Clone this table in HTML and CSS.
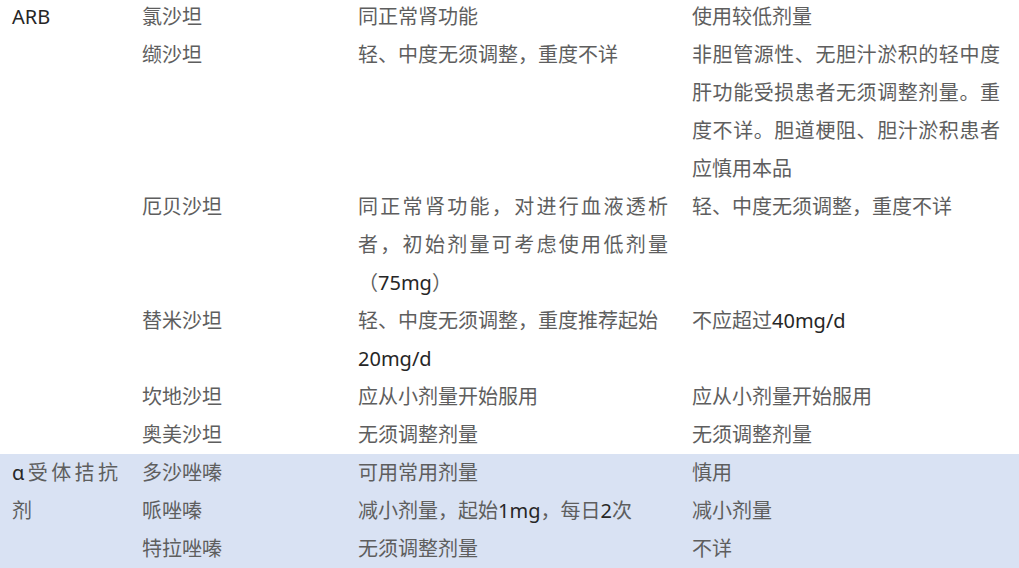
FILE: index.html
```html
<!DOCTYPE html>
<html lang="zh-CN">
<head>
  <meta charset="UTF-8">
  <meta name="viewport" content="width=device-width, initial-scale=1.0">
  <title>肝肾功能不全用药剂量</title>
  <link rel="stylesheet" href="styles.css">
</head>
<body>
  <table class="dose-table">
    <colgroup>
      <col class="c-class">
      <col class="c-drug">
      <col class="c-renal">
      <col class="c-hepatic">
    </colgroup>
    <tbody>
      <tr>
        <td class="lat" rowspan="6">ARB</td>
        <td>氯沙坦</td>
        <td>同正常肾功能</td>
        <td class="last">使用较低剂量</td>
      </tr>
      <tr>
        <td>缬沙坦</td>
        <td>轻、中度无须调整，重度不详</td>
        <td class="last just">非胆管源性、无胆汁淤积的轻中度肝功能受损患者无须调整剂量。重度不详。胆道梗阻、胆汁淤积患者应慎用本品</td>
      </tr>
      <tr>
        <td>厄贝沙坦</td>
        <td class="just">同正常肾功能，对进行血液透析者，初始剂量可考虑使用低剂量（<span class="lat">75mg</span>）</td>
        <td class="last">轻、中度无须调整，重度不详</td>
      </tr>
      <tr>
        <td>替米沙坦</td>
        <td>轻、中度无须调整，重度推荐起始<span class="lat">20mg/d</span></td>
        <td class="last">不应超过<span class="lat">40mg/d</span></td>
      </tr>
      <tr>
        <td>坎地沙坦</td>
        <td>应从小剂量开始服用</td>
        <td class="last">应从小剂量开始服用</td>
      </tr>
      <tr>
        <td>奥美沙坦</td>
        <td>无须调整剂量</td>
        <td class="last">无须调整剂量</td>
      </tr>
      <tr class="shade">
        <td class="just" rowspan="3"><span class="lat">α</span>受体拮抗剂</td>
        <td>多沙唑嗪</td>
        <td>可用常用剂量</td>
        <td class="last">慎用</td>
      </tr>
      <tr class="shade">
        <td>哌唑嗪</td>
        <td>减小剂量，起始<span class="lat">1mg</span>，每日<span class="lat">2</span>次</td>
        <td class="last">减小剂量</td>
      </tr>
      <tr class="shade">
        <td>特拉唑嗪</td>
        <td>无须调整剂量</td>
        <td class="last">不详</td>
      </tr>
    </tbody>
  </table>
</body>
</html>
```

FILE: styles.css
```css
* { margin: 0; padding: 0; box-sizing: border-box; }
body {
  font-family: "Noto Sans", "Noto Sans CJK SC", sans-serif;
  font-size: 20px;
  color: #5e5e5e;
  background: #fff;
}
.dose-table {
  border-collapse: collapse;
  table-layout: fixed;
  width: 1019px;
  margin-top: -2px;
}
.c-class { width: 130px; }
.c-drug { width: 216px; }
.c-renal { width: 334px; }
.c-hepatic { width: 339px; }
td {
  padding: 0 12px;
  line-height: 38px;
  vertical-align: top;
  text-align: left;
}
td.last { padding-right: 19px; }
.just { text-align: justify; }
.lat { color: #262626; }
.shade td { background: #d9e2f3; }
```
